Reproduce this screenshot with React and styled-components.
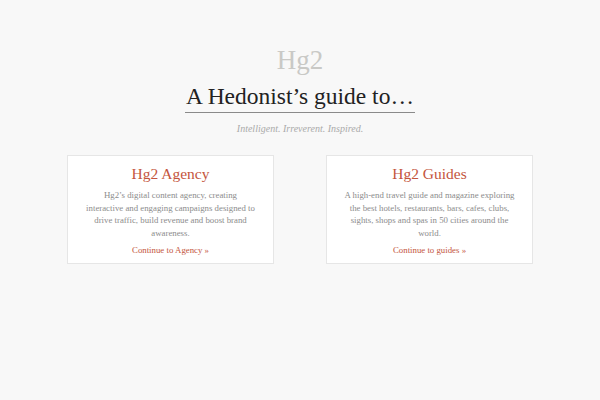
import React from 'react';
import styled, { createGlobalStyle } from 'styled-components';

const GlobalStyle = createGlobalStyle`
  html, body {
    margin: 0;
    padding: 0;
    background: #f8f8f8;
    font-family: "Liberation Serif", "Times New Roman", serif;
  }
`;

const Page = styled.div`
  width: 600px;
  height: 400px;
  display: flex;
  flex-direction: column;
  align-items: center;
  padding-top: 44px;
  box-sizing: border-box;
`;

const Logo = styled.div`
  font-size: 27px;
  line-height: 32px;
  color: #c9c9c6;
`;

const Heading = styled.h1`
  margin: 5px 0 0;
  font-size: 23.5px;
  line-height: 30px;
  font-weight: normal;
  color: #222;
  padding: 0 1px 1px;
  border-bottom: 1px solid #8a8a8a;
`;

const Tagline = styled.p`
  margin: 10px 0 0;
  font-size: 10px;
  font-style: italic;
  color: #aaa;
`;

const Cards = styled.div`
  display: flex;
  gap: 52px;
  margin-top: 21px;
`;

const Card = styled.section`
  width: 207px;
  height: 109px;
  box-sizing: border-box;
  background: #fff;
  border: 1px solid #e6e6e6;
  display: flex;
  flex-direction: column;
  align-items: center;
  text-align: center;
  padding: 8px 10px 0;
`;

const CardTitle = styled.h2`
  margin: 0;
  font-size: 15.5px;
  line-height: 20px;
  font-weight: normal;
  color: #c4553d;
`;

const CardText = styled.p`
  margin: 5px 0 0;
  font-size: 8.8px;
  line-height: 12.7px;
  color: #8c8c8c;
`;

const Line = styled.span`
  display: block;
  white-space: nowrap;
`;

const CardLink = styled.a`
  margin-top: 5px;
  font-size: 8.8px;
  color: #c4553d;
  text-decoration: none;
`;

const cards = [
  {
    title: 'Hg2 Agency',
    lines: [
      'Hg2’s digital content agency, creating',
      'interactive and engaging campaigns designed to',
      'drive traffic, build revenue and boost brand',
      'awareness.',
    ],
    link: 'Continue to Agency »',
  },
  {
    title: 'Hg2 Guides',
    lines: [
      'A high-end travel guide and magazine exploring',
      'the best hotels, restaurants, bars, cafes, clubs,',
      'sights, shops and spas in 50 cities around the',
      'world.',
    ],
    link: 'Continue to guides »',
  },
];

export default function App() {
  return (
    <>
      <GlobalStyle />
      <Page>
        <Logo>Hg2</Logo>
        <Heading>A Hedonist’s guide to…</Heading>
        <Tagline>Intelligent. Irreverent. Inspired.</Tagline>
        <Cards>
          {cards.map((c) => (
            <Card key={c.title}>
              <CardTitle>{c.title}</CardTitle>
              <CardText>
                {c.lines.map((l) => (
                  <Line key={l}>{l}</Line>
                ))}
              </CardText>
              <CardLink href="#">{c.link}</CardLink>
            </Card>
          ))}
        </Cards>
      </Page>
    </>
  );
}
